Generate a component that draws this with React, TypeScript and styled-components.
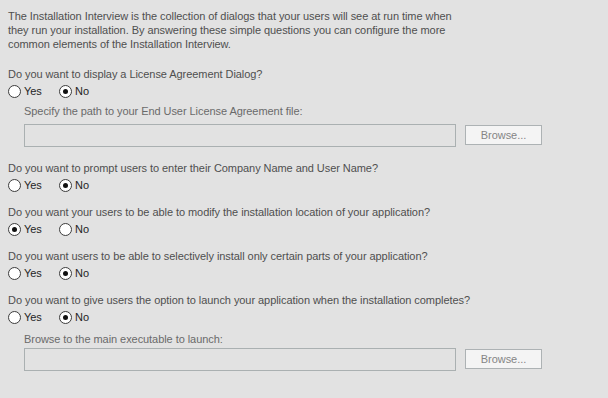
import React, { useState } from 'react';
import styled, { createGlobalStyle } from 'styled-components';

const GlobalStyle = createGlobalStyle`
  html, body {
    margin: 0;
    padding: 0;
    background: #e2e2e2;
  }
  body {
    font-family: "Liberation Sans", Arial, sans-serif;
    font-size: 11px;
    letter-spacing: -0.06px;
  }
`;

const Page = styled.div`
  width: 608px;
  height: 398px;
  box-sizing: border-box;
  padding: 9px 8px 0 8px;
  background: #e2e2e2;
  overflow: hidden;
`;

const Intro = styled.p`
  margin: 0 0 16px 0;
  width: 450px;
  line-height: 14px;
  color: #4f4f4f;
`;

const Group = styled.div<{ $spaced: boolean }>`
  display: flex;
  flex-direction: column;
  margin-bottom: ${p => (p.$spaced ? 14 : 12)}px;
`;

const Question = styled.div`
  line-height: 14px;
  color: #4f4f4f;
  white-space: nowrap;
`;

const RadioRow = styled.div`
  display: flex;
  align-items: center;
  height: 16px;
  margin-top: 2px;
`;

const RadioOption = styled.label`
  display: flex;
  align-items: center;
  gap: 3px;
  min-width: 51px;
  color: #1f1f1f;
  cursor: default;
`;

const RadioCircle = styled.span<{ $checked: boolean }>`
  position: relative;
  width: 11px;
  height: 11px;
  border: 1px solid #3c3c3c;
  border-radius: 50%;
  background: #ffffff;
  flex-shrink: 0;

  &::after {
    content: '';
    display: ${p => (p.$checked ? 'block' : 'none')};
    position: absolute;
    left: 3px;
    top: 3px;
    width: 5px;
    height: 5px;
    border-radius: 50%;
    background: #111111;
  }
`;

const SubBlock = styled.div<{ $top: number; $gap: number }>`
  display: flex;
  flex-direction: column;
  padding-left: 16px;
  margin-top: ${p => p.$top}px;
  gap: ${p => p.$gap}px;
`;

const SubLabel = styled.div`
  line-height: 14px;
  color: #6a6a6a;
`;

const PathRow = styled.div`
  display: flex;
  align-items: flex-start;
  gap: 9px;
`;

const PathInput = styled.div`
  width: 430px;
  height: 21px;
  border: 1px solid #aab0b1;
  background: #e2e2e2;
`;

const BrowseButton = styled.div`
  margin-top: 1px;
  width: 75px;
  height: 18px;
  border: 1px solid #adb2b4;
  background: #f4f4f4;
  color: #858585;
  display: flex;
  align-items: center;
  justify-content: center;
  font-size: 11px;
`;

type Answer = 'yes' | 'no';

interface QuestionData {
  text: string;
  answer: Answer;
  sub?: { label: string; top: number; gap: number };
}

const questions: QuestionData[] = [
  {
    text: 'Do you want to display a License Agreement Dialog?',
    answer: 'no',
    sub: { label: 'Specify the path to your End User License Agreement file:', top: 5, gap: 6 },
  },
  { text: 'Do you want to prompt users to enter their Company Name and User Name?', answer: 'no' },
  { text: 'Do you want your users to be able to modify the installation location of your application?', answer: 'yes' },
  { text: 'Do you want users to be able to selectively install only certain parts of your application?', answer: 'no' },
  {
    text: 'Do you want to give users the option to launch your application when the installation completes?',
    answer: 'no',
    sub: { label: 'Browse to the main executable to launch:', top: 7, gap: 2 },
  },
];

const Radio: React.FC<{ label: string; checked: boolean; onClick: () => void }> = ({ label, checked, onClick }) => (
  <RadioOption onClick={onClick}>
    <RadioCircle $checked={checked} />
    {label}
  </RadioOption>
);

export default function App() {
  const [answers, setAnswers] = useState<Answer[]>(questions.map(q => q.answer));

  const setAnswer = (i: number, a: Answer) =>
    setAnswers(prev => prev.map((v, idx) => (idx === i ? a : v)));

  return (
    <>
      <GlobalStyle />
      <Page>
        <Intro>
          The Installation Interview is the collection of dialogs that your users will see at run time when
          they run your installation. By answering these simple questions you can configure the more
          common elements of the Installation Interview.
        </Intro>
        {questions.map((q, i) => (
          <Group key={i} $spaced={!!q.sub}>
            <Question>{q.text}</Question>
            <RadioRow>
              <Radio label="Yes" checked={answers[i] === 'yes'} onClick={() => setAnswer(i, 'yes')} />
              <Radio label="No" checked={answers[i] === 'no'} onClick={() => setAnswer(i, 'no')} />
            </RadioRow>
            {q.sub && (
              <SubBlock $top={q.sub.top} $gap={q.sub.gap}>
                <SubLabel>{q.sub.label}</SubLabel>
                <PathRow>
                  <PathInput />
                  <BrowseButton>Browse...</BrowseButton>
                </PathRow>
              </SubBlock>
            )}
          </Group>
        ))}
      </Page>
    </>
  );
}
